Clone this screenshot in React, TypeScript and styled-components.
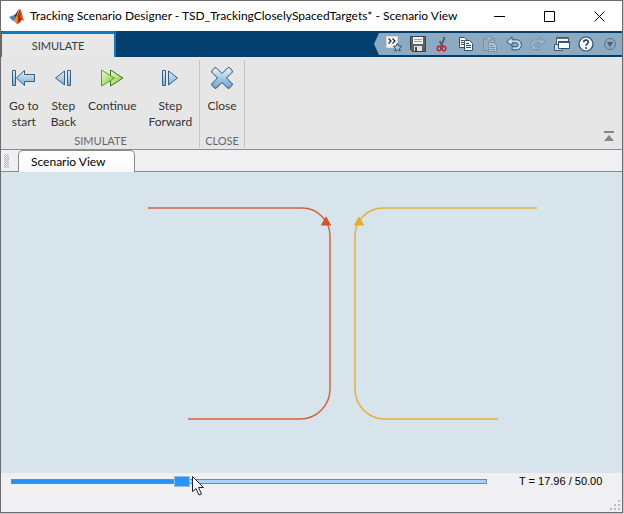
import React, { useState } from "react";
import styled, { createGlobalStyle } from "styled-components";

const GlobalStyle = createGlobalStyle`
  *, *::before, *::after { box-sizing: border-box; }
  body {
    margin: 0;
    background: #c9c9cb;
    font-family: Lato, "Open Sans", sans-serif;
    font-size: 12px;
    color: #000;
  }
  button { font: inherit; color: inherit; border: 0; background: none; padding: 0; margin: 0; }
  svg { display: block; }
`;

const Desktop = styled.div`
  min-height: 100vh;
  display: flex;
  padding: 0 1px 1px 0;
`;

const Window = styled.main`
  flex: 1;
  min-width: 0;
  display: flex;
  flex-direction: column;
  background: #f0f0f2;
  border: 1px solid #6c6b70;
`;

const TitleBar = styled.header`
  display: flex;
  align-items: center;
  height: 30px;
  padding-left: 7px;
  gap: 4px;
  background: #fff;
`;

const Title = styled.h1`
  flex: 1;
  margin: 0;
  font-size: 12px;
  line-height: 16px;
  font-weight: 400;
  white-space: nowrap;
`;

const WindowButton = styled.button`
  width: 46px;
  height: 30px;
  display: grid;
  place-items: center;
`;

const RibbonBar = styled.div`
  display: flex;
  justify-content: space-between;
  height: 26px;
  background: #03406f;
`;

const RibbonTab = styled.button`
  width: 115px;
  border: solid #0d7bc2;
  border-width: 3px 2px 0 1px;
  border-radius: 3px 2px 0 0;
  background: #e8e8e8;
  color: #303b47;
  font-size: 11px;
`;

const QuickAccess = styled.div`
  display: flex;
  margin: 2px 0;
  padding-left: 8px;
  background: #8cabc2;
  clip-path: polygon(0 50%, 5px 0, 100% 0, 100% 100%, 5px 100%);
`;

const QuickButton = styled.button`
  width: 24px;
  height: 22px;
  display: grid;
  place-items: center;

  &:disabled { opacity: 0.35; }
`;

const Toolstrip = styled.div`
  display: flex;
  height: 93px;
  padding-top: 3px;
  background: #e6e6e6;
  border-bottom: 1px solid #8c8c8c;
`;

const Section = styled.section<{ $compact?: boolean }>`
  display: flex;
  flex-direction: column;
  justify-content: space-between;
  margin-bottom: 1px;
  padding: ${(p) => (p.$compact ? "6px 5px 0" : "6px 7px 0 8px")};
  border-right: 1px solid #c5c5c8;
`;

const Tools = styled.div`
  display: flex;
  align-items: flex-start;
  justify-content: center;
  gap: 12px;
`;

const ToolButton = styled.button`
  display: flex;
  flex-direction: column;
  align-items: center;
  gap: 8px;
  line-height: 16px;
  color: #333;
  text-align: center;
  white-space: pre-line;
`;

const SectionLabel = styled.h2`
  margin: 0;
  font-size: 11px;
  line-height: 14px;
  font-weight: 400;
  text-align: center;
  color: #64686e;
`;

const CollapseButton = styled.button`
  align-self: flex-end;
  margin: 0 7px 7px auto;
`;

const DocumentBar = styled.div`
  display: flex;
  height: 22px;
  padding-left: 3px;
  gap: 9px;
  border-bottom: 1px solid #8b8b8b;
`;

const Grip = styled.div`
  width: 5px;
  margin: 4px 0 3px;
  background: repeating-conic-gradient(#b0b1bd 0 25%, transparent 0 50%) 0 0 / 2px 2px;
`;

const DocumentTab = styled.button`
  width: 117px;
  height: 22px;
  padding: 0 0 1px 12px;
  text-align: left;
  background: linear-gradient(#fff, #f9f9fb);
  border: 1px solid #8b8b8b;
  border-bottom: 0;
  border-radius: 5px 5px 0 0;
`;

const Plot = styled.svg`
  flex: 1 1 300px;
  width: 100%;
  min-height: 0;
  background: #d7e4eb;
`;

const Footer = styled.footer`
  display: flex;
  align-items: flex-start;
  height: 39px;
  padding-left: 10px;
`;

const Slider = styled.div`
  position: relative;
  flex: 1;
  height: 17px;
  display: grid;
  align-items: center;

  > * { grid-area: 1 / 1; }
`;

const Track = styled.div`
  height: 5px;
  background: #a7d3fa;
  border: 1px solid #75899c;
`;

const Elapsed = styled.div`
  height: 3px;
  background: #2591f5;
`;

const Range = styled.input`
  appearance: none;
  width: calc(100% + 16px);
  height: 17px;
  margin: 0 -8px;
  background: transparent;
  outline: none;

  &::-webkit-slider-thumb {
    appearance: none;
    width: 16px;
    height: 11px;
    background: #2b94f7;
    border: 1px solid #9dbcd8;
  }
`;

const Pointer = styled.svg`
  position: absolute;
  top: 3px;
  pointer-events: none;
`;

const Time = styled.output`
  width: 113px;
  margin-left: 22px;
  padding: 0 0 0 10px;
  font: 11px/17px "Liberation Sans", Arial, sans-serif;
  white-space: nowrap;
`;

const ResizeGrip = styled.svg`
  align-self: flex-end;
  margin: 0 1px 1px -13px;
`;

const Logo = () => (
  <svg width="18" height="18" viewBox="0 0 18 18" aria-hidden="true">
    <path d="M1 10 6 8l2 3-3 3z" fill="#4f86a7" />
    <path d="M6 8c2 0 3-4 5-6L8 11z" fill="#26323e" />
    <path d="M5 14c3 0 3 2 4 3 4-1 4-4 5-4 2 0 2 1 3 2-3-4-3-12-5-13-2 2-2 8-7 12z" fill="#d84a16" />
    <path d="M12 2c-1 4-1 7 1 11l-3 3c1-4 0-10 2-14z" fill="#8f1d10" />
    <path d="M9 8c-1 3-2 5-4 6 2 0 2 1 4 3 1-3 1-5 0-9z" fill="#f28c25" />
  </svg>
);

const blueLine = "#345f85";

const BlueGradient = ({ id }: { id: string }) => (
  <linearGradient id={id} x1="0" y1="0" x2="0" y2="1">
    <stop offset="0" stopColor="#e3f2fc" />
    <stop offset="1" stopColor="#78acd6" />
  </linearGradient>
);

const GoToStartIcon = () => (
  <svg width="24" height="24" viewBox="0 0 24 24" aria-hidden="true">
    <defs><BlueGradient id="startBlue" /></defs>
    <path d="M.5 4.500h3v15h-3zM4.500 12l8-7.500v4h10v7h-10v4z" fill="url(#startBlue)" stroke={blueLine} />
  </svg>
);

const StepBackIcon = () => (
  <svg width="24" height="24" viewBox="0 0 24 24" aria-hidden="true">
    <defs><BlueGradient id="backBlue" /></defs>
    <path d="M4.500 12l9-7v14zM16.500 4.500h3v15h-3z" fill="url(#backBlue)" stroke={blueLine} />
  </svg>
);

const StepForwardIcon = () => (
  <svg width="24" height="24" viewBox="0 0 24 24" aria-hidden="true">
    <defs><BlueGradient id="forwardBlue" /></defs>
    <path d="M4.500 4.500h3v15h-3zM10.500 5l9 7-9 7z" fill="url(#forwardBlue)" stroke={blueLine} />
  </svg>
);

const ContinueIcon = () => (
  <svg width="24" height="24" viewBox="0 0 24 24" aria-hidden="true">
    <defs>
      <linearGradient id="goGreen" x1="0" y1="0" x2="1" y2="1">
        <stop offset="0" stopColor="#eefad0" />
        <stop offset="1" stopColor="#83c52e" />
      </linearGradient>
    </defs>
    <path d="M10.500 4 23 12 10.500 20z" fill="url(#goGreen)" stroke="#2d7a22" />
    <path d="M1.500 4 14.500 12 1.500 20z" fill="url(#goGreen)" stroke="#5a9c2e" />
  </svg>
);

const CloseIcon = () => (
  <svg width="24" height="24" viewBox="0 0 24 24" aria-hidden="true">
    <defs>
      <linearGradient id="closeBlue" x1="0" y1="0" x2="0" y2="1">
        <stop offset="0" stopColor="#e6f4fc" />
        <stop offset="1" stopColor="#66a3d2" />
      </linearGradient>
    </defs>
    <path
      d="M6 1.500 12 7.500l6-6c2 0 4 2 4.500 4.500L16.500 12l6 6c-.5 2-2.500 4-4.500 4.500l-6-6-6 6C4 22 2 20 1.500 18l6-6-6-6C2 4 4 2 6 1.500z"
      fill="url(#closeBlue)"
      stroke="#2f4b66"
    />
  </svg>
);

const FavoritesIcon = () => (
  <svg width="16" height="16" viewBox="0 0 16 16">
    <path d="M.5.500h11v11H.5z" fill="#fafafa" stroke="#d5d9dc" />
    <path d="M2.500 2.500 5 5 2.500 7.500M6.500 2.500 9 5 6.500 7.500" fill="none" stroke="#222" strokeWidth="1.200" />
    <path d="m11.500 7 1.200 3 3 .2-2.200 2 .7 3-2.700-1.600-2.700 1.600.7-3-2.200-2 3-.2z" fill="#a9cbe5" stroke="#36506b" />
  </svg>
);

const SaveIcon = () => (
  <svg width="16" height="16" viewBox="0 0 16 16">
    <path d="M.5.500h15v15H2.500l-2-2z" fill="#5b636a" stroke="#3a4148" />
    <path d="M3 1h10v7H3z" fill="#f2f2f2" />
    <path d="M4 3.500h8M4 5.500h8" stroke="#a0a0a0" />
    <path d="M4 10h8v5H4z" fill="#e2e4e6" />
    <path d="M5 11h2v4H5z" fill="#3e454c" />
  </svg>
);

const CutIcon = () => (
  <svg width="16" height="16" viewBox="0 0 16 16" fill="none">
    <path d="M10.500 1 7 10.500" stroke="#565c66" strokeWidth="2" />
    <path d="M5.500 5 9 11" stroke="#565c66" strokeWidth="1.500" />
    <ellipse cx="5" cy="12.500" rx="1.800" ry="2.300" stroke="#b7242c" strokeWidth="1.400" />
    <ellipse cx="10" cy="12.500" rx="1.800" ry="2.300" stroke="#b7242c" strokeWidth="1.400" />
  </svg>
);

const CopyIcon = () => (
  <svg width="16" height="16" viewBox="0 0 16 16">
    <path d="M1.500 1.500h5l3 3v7h-8z" fill="#f5f7f8" stroke="#33506c" />
    <path d="M3 4.500h3M3 6.500h4M3 8.500h4" stroke="#33506c" />
    <path d="M6.500 4.500h5l3 3v7h-8z" fill="#f5f7f8" stroke="#33506c" />
    <path d="M8 7.500h3M8 9.500h5M8 11.500h5" stroke="#33506c" />
  </svg>
);

const PasteIcon = () => (
  <svg width="16" height="16" viewBox="0 0 16 16">
    <path d="M1.500 2.500h11v12h-11z" fill="#a8b4bd" stroke="#59636e" />
    <path d="M4.500 1h5v3h-5z" fill="#eef1f4" stroke="#59636e" />
    <path d="M6.500 6.500h5l3 3v6h-8z" fill="#eef1f4" stroke="#59636e" />
    <path d="M8 9.500h3M8 11.500h5M8 13.500h5" stroke="#59636e" />
  </svg>
);

const UndoIcon = () => (
  <svg width="16" height="16" viewBox="0 0 16 16">
    <path d="M.7 5.800 6 .8v3h4.500c6.500 0 6.500 10 0 10H6v-3h4c3 0 3-4 0-4H6v3z" fill="#c6dfef" stroke="#2f5373" />
  </svg>
);

const RedoIcon = () => (
  <svg width="16" height="16" viewBox="0 0 16 16">
    <path d="M15.300 5.800 10 .8v3H5.500c-6.500 0-6.500 10 0 10H9v-3H6c-3 0-3-4 0-4h4v3z" fill="#c5ced6" stroke="#4d5e70" />
  </svg>
);

const WindowsIcon = () => (
  <svg width="16" height="16" viewBox="0 0 16 16">
    <path d="M2.500 1.500h12v7h-12z" fill="#f3f5f7" stroke="#4b5b6b" />
    <path d="M3 2.500h11" stroke="#5c6e80" />
    <path d="M.5 8.500h8v6h-8z" fill="#d8dde1" stroke="#4b5b6b" />
    <path d="M4.500 5.500h11v7h-11z" fill="#f8fafb" stroke="#2f4d6b" />
    <path d="M5 6.500h10" stroke="#3d6189" />
  </svg>
);

const HelpIcon = () => (
  <svg width="16" height="16" viewBox="0 0 16 16" fill="none">
    <circle cx="8" cy="8" r="7" fill="#f3f8fb" stroke="#31475d" strokeWidth="1.200" />
    <path d="M5.700 6.200c0-3 4.600-3 4.600 0 0 1.600-2.300 1.600-2.300 3.500" stroke="#263c52" strokeWidth="1.500" />
    <circle cx="8" cy="11.900" r="1" fill="#263c52" />
  </svg>
);

const MoreIcon = () => (
  <svg width="14" height="14" viewBox="0 0 14 14">
    <circle cx="7" cy="7" r="5.500" fill="none" stroke="#66717c" />
    <path d="M3.800 5h6.400L7 10z" fill="#525c66" />
  </svg>
);

const quickActions: { name: string; Icon: () => React.ReactElement; disabled?: boolean }[] = [
  { name: "Favorites", Icon: FavoritesIcon },
  { name: "Save", Icon: SaveIcon },
  { name: "Cut", Icon: CutIcon },
  { name: "Copy", Icon: CopyIcon },
  { name: "Paste", Icon: PasteIcon, disabled: true },
  { name: "Undo", Icon: UndoIcon },
  { name: "Redo", Icon: RedoIcon, disabled: true },
  { name: "Switch windows", Icon: WindowsIcon },
  { name: "Help", Icon: HelpIcon },
  { name: "More", Icon: MoreIcon },
];

const sections = [
  {
    label: "SIMULATE",
    tools: [
      { text: "Go to\nstart", Icon: GoToStartIcon },
      { text: "Step\nBack", Icon: StepBackIcon },
      { text: "Continue", Icon: ContinueIcon },
      { text: "Step\nForward", Icon: StepForwardIcon },
    ],
  },
  { label: "CLOSE", tools: [{ text: "Close", Icon: CloseIcon }] },
];

const END_TIME = 50;

export default function App() {
  const [time, setTime] = useState(17.96);
  const percent = (time / END_TIME) * 100;

  return (
    <>
      <GlobalStyle />
      <Desktop>
        <Window>
          <TitleBar>
            <Logo />
            <Title>Tracking Scenario Designer - TSD_TrackingCloselySpacedTargets* - Scenario View</Title>
            <WindowButton aria-label="Minimize">
              <svg width="11" height="11"><path d="M0 5.500h11" stroke="#000" /></svg>
            </WindowButton>
            <WindowButton aria-label="Maximize">
              <svg width="11" height="11"><path d="M.5.500h10v10H.5z" stroke="#000" fill="none" /></svg>
            </WindowButton>
            <WindowButton aria-label="Close window">
              <svg width="11" height="11"><path d="m.5.500 10 10m0-10-10 10" stroke="#000" /></svg>
            </WindowButton>
          </TitleBar>

          <RibbonBar>
            <RibbonTab>SIMULATE</RibbonTab>
            <QuickAccess>
              {quickActions.map(({ name, Icon, disabled }) => (
                <QuickButton key={name} aria-label={name} disabled={disabled}><Icon /></QuickButton>
              ))}
            </QuickAccess>
          </RibbonBar>

          <Toolstrip>
            {sections.map(({ label, tools }) => (
              <Section key={label} $compact={tools.length === 1}>
                <Tools>
                  {tools.map(({ text, Icon }) => (
                    <ToolButton key={text}><Icon />{text}</ToolButton>
                  ))}
                </Tools>
                <SectionLabel>{label}</SectionLabel>
              </Section>
            ))}
            <CollapseButton aria-label="Collapse toolstrip">
              <svg width="12" height="12"><path d="M1 1h10v2H1zM6 5l5 6H1z" fill="#858585" /></svg>
            </CollapseButton>
          </Toolstrip>

          <DocumentBar>
            <Grip />
            <DocumentTab>Scenario View</DocumentTab>
          </DocumentBar>

          <Plot viewBox="0 0 621 301" role="img" aria-label="Two target trajectories" fill="none">
            <g stroke="#d0643f" strokeWidth="1.500">
              <path d="M147 36h154a28 28 0 0 1 28 28v153a30 30 0 0 1-30 30H187" />
              <path d="M325 45l4.500 8h-9z" fill="#d0532a" stroke="#d0532a" strokeWidth="1" />
            </g>
            <g stroke="#e2b13c" strokeWidth="1.500">
              <path d="M536 36H382a28 28 0 0 0-28 28v153a30 30 0 0 0 30 30h113" />
              <path d="M358 45l4.500 8h-9z" fill="#e5ad25" stroke="#e5ad25" strokeWidth="1" />
            </g>
          </Plot>

          <Footer>
            <Slider>
              <Track><Elapsed style={{ width: `${percent}%` }} /></Track>
              <Range
                type="range"
                aria-label="Simulation time"
                min={0}
                max={END_TIME}
                step={0.01}
                value={time}
                onChange={(e) => setTime(Number(e.target.value))}
              />
              <Pointer width="13" height="20" viewBox="0 0 13 20" style={{ left: `calc(${percent}% + 10px)` }}>
                <path d="M.5.500v15l3.500-3 3 6.500 2.500-1-3-6.500h5z" fill="#fff" stroke="#1c2430" />
              </Pointer>
            </Slider>
            <Time>T = {time.toFixed(2)} / {END_TIME.toFixed(2)}</Time>
            <ResizeGrip width="12" height="12" viewBox="0 0 12 12" fill="#b8bcc4">
              <path d="M9 1h2v2H9zM5 5h2v2H5zM9 5h2v2H9zM1 9h2v2H1zM5 9h2v2H5zM9 9h2v2H9z" />
            </ResizeGrip>
          </Footer>
        </Window>
      </Desktop>
    </>
  );
}
